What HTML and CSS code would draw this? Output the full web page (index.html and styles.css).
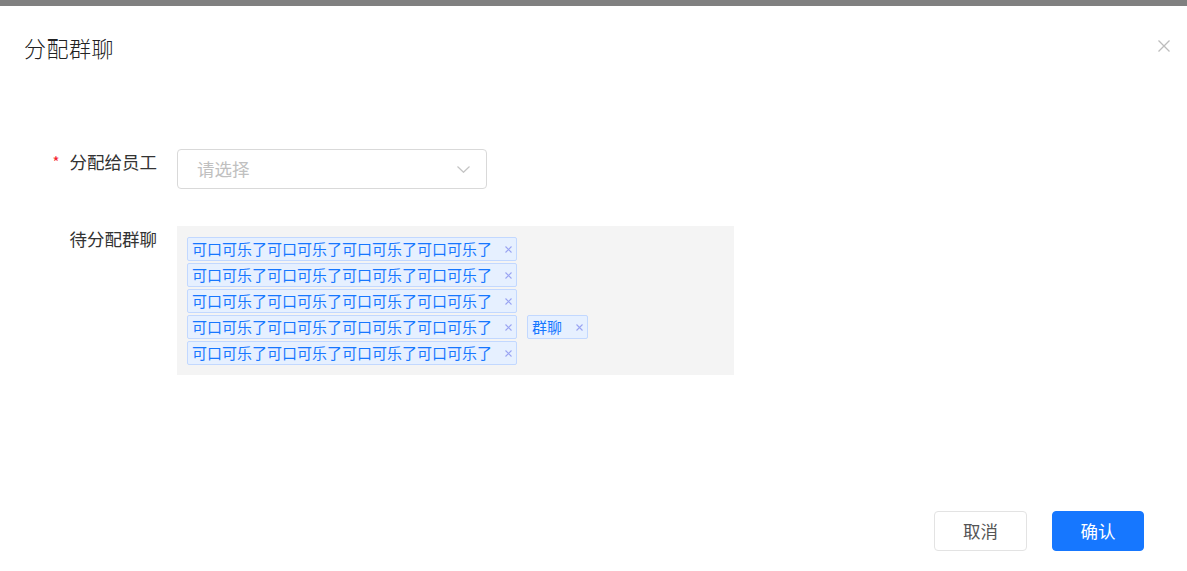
FILE: index.html
```html
<!DOCTYPE html>
<html lang="zh-CN">
<head>
<meta charset="utf-8">
<title>分配群聊</title>
<link rel="stylesheet" href="styles.css">
</head>
<body>
<div class="mask-bar"></div>
<div class="modal">
  <div class="modal-header">
    <div class="modal-title">分配群聊</div>
    <button class="close-btn" aria-label="关闭">
      <svg width="12" height="12" viewBox="0 0 12 12"><path d="M0.5 0.5L11.5 11.5M11.5 0.5L0.5 11.5" stroke="#bdbdbd" stroke-width="1.3" fill="none"/></svg>
    </button>
  </div>
  <div class="modal-body">
    <div class="form">
      <div class="label"><span class="req">*</span>分配给员工</div>
      <div class="control">
        <div class="select">
          <span class="placeholder">请选择</span>
          <svg class="chevron" width="13" height="7" viewBox="0 0 13 7"><path d="M0.5 0.5L6.5 6.3L12.5 0.5" stroke="#c4c4c4" stroke-width="1.2" fill="none"/></svg>
        </div>
      </div>
      <div class="label">待分配群聊</div>
      <div class="control">
        <div class="tag-box">
          <span class="tag">可口可乐了可口可乐了可口可乐了可口可乐了<svg class="tag-x" width="7" height="7" viewBox="0 0 7 7"><path d="M0.5 0.5L6.5 6.5M6.5 0.5L0.5 6.5" stroke="#9aa4f2" stroke-width="1.1" fill="none"/></svg></span>
          <span class="tag">可口可乐了可口可乐了可口可乐了可口可乐了<svg class="tag-x" width="7" height="7" viewBox="0 0 7 7"><path d="M0.5 0.5L6.5 6.5M6.5 0.5L0.5 6.5" stroke="#9aa4f2" stroke-width="1.1" fill="none"/></svg></span>
          <span class="tag">可口可乐了可口可乐了可口可乐了可口可乐了<svg class="tag-x" width="7" height="7" viewBox="0 0 7 7"><path d="M0.5 0.5L6.5 6.5M6.5 0.5L0.5 6.5" stroke="#9aa4f2" stroke-width="1.1" fill="none"/></svg></span>
          <span class="tag">可口可乐了可口可乐了可口可乐了可口可乐了<svg class="tag-x" width="7" height="7" viewBox="0 0 7 7"><path d="M0.5 0.5L6.5 6.5M6.5 0.5L0.5 6.5" stroke="#9aa4f2" stroke-width="1.1" fill="none"/></svg></span>
          <span class="tag tag-short">群聊<svg class="tag-x" width="7" height="7" viewBox="0 0 7 7"><path d="M0.5 0.5L6.5 6.5M6.5 0.5L0.5 6.5" stroke="#9aa4f2" stroke-width="1.1" fill="none"/></svg></span>
          <span class="tag">可口可乐了可口可乐了可口可乐了可口可乐了<svg class="tag-x" width="7" height="7" viewBox="0 0 7 7"><path d="M0.5 0.5L6.5 6.5M6.5 0.5L0.5 6.5" stroke="#9aa4f2" stroke-width="1.1" fill="none"/></svg></span>
        </div>
      </div>
    </div>
  </div>
  <div class="modal-footer">
    <button class="btn btn-default">取消</button>
    <button class="btn btn-primary">确认</button>
  </div>
</div>
</body>
</html>
```

FILE: styles.css
```css
html, body {
  margin: 0;
  padding: 0;
  background: #ffffff;
}

body {
  font-family: "Noto Sans CJK SC", "Noto Sans", "Liberation Sans", sans-serif;
  color: #333333;
  overflow: hidden;
}

.mask-bar {
  height: 6px;
  background: #808080;
}

.modal {
  height: 565px;
  display: flex;
  flex-direction: column;
  background: #ffffff;
}

.modal-header {
  display: flex;
  align-items: center;
  justify-content: space-between;
  padding: 26px 17px 0 24px;
  height: 30px;
}

.modal-title {
  font-size: 22px;
  line-height: 30px;
  font-weight: 300;
  color: #222222;
  letter-spacing: 0.5px;
}

.close-btn {
  border: none;
  background: none;
  padding: 0;
  width: 12px;
  height: 12px;
  margin-top: -3px;
  display: flex;
  cursor: pointer;
}

.modal-body {
  padding-top: 87px;
}

.form {
  display: grid;
  grid-template-columns: 157px auto;
  column-gap: 20px;
  row-gap: 37px;
  align-items: start;
}

.label {
  text-align: right;
  font-size: 17.5px;
  line-height: 25px;
  color: #333333;
  white-space: nowrap;
}

.req {
  color: #f5222d;
  font-size: 15px;
  margin-right: 10px;
  position: relative;
  top: -1px;
}

.select {
  box-sizing: border-box;
  width: 310px;
  height: 40px;
  border: 1px solid #d9d9d9;
  border-radius: 4px;
  display: flex;
  align-items: center;
  justify-content: space-between;
  padding: 0 16px 0 19px;
}

.placeholder {
  font-size: 17.5px;
  color: #c0c0c0;
  line-height: 24px;
}

.chevron {
  display: block;
}

.tag-box {
  box-sizing: border-box;
  width: 557px;
  background: #f4f4f4;
  padding: 11px 10px 10px 10px;
  display: flex;
  flex-wrap: wrap;
  column-gap: 10px;
  row-gap: 2px;
  align-items: flex-start;
}

.tag {
  box-sizing: border-box;
  height: 24px;
  display: inline-flex;
  align-items: center;
  padding: 0 4px 0 4px;
  border: 1px solid #c2d8ff;
  border-radius: 2px;
  background: #e6f0ff;
  color: #1677ff;
  font-size: 15px;
  line-height: 22px;
  white-space: nowrap;
}

.tag-x {
  display: block;
  margin-left: 13px;
  flex: none;
}

.tag-short .tag-x {
  margin-left: 14px;
}

.modal-footer {
  margin-top: auto;
  display: flex;
  justify-content: flex-end;
  gap: 25px;
  padding: 0 43px 20px 0;
}

.btn {
  box-sizing: border-box;
  height: 40px;
  border-radius: 4px;
  font-family: inherit;
  font-size: 17.5px;
  line-height: 24px;
  cursor: pointer;
  padding: 0;
}

.btn-default {
  width: 93px;
  background: #ffffff;
  border: 1px solid #e3e3e3;
  color: #555555;
}

.btn-primary {
  width: 92px;
  background: #1677ff;
  border: 1px solid #1677ff;
  color: #ffffff;
}
```
